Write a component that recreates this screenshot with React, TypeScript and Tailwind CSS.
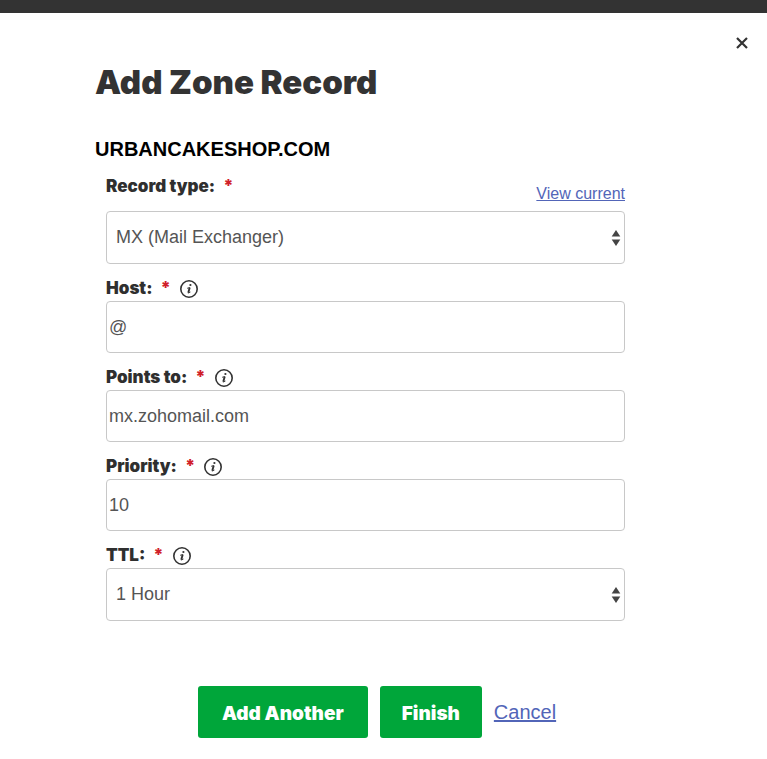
import React from "react";

const InfoIcon = () => (
  <svg viewBox="0 0 20 20" className="h-5 w-5" fill="none" aria-hidden="true">
    <circle cx="10" cy="10" r="8.2" stroke="#333333" strokeWidth="1.6" />
    <circle cx="11.4" cy="6" r="1.1" fill="#333333" />
    <path d="M10.7 8.6L9.3 13.8" stroke="#333333" strokeWidth="1.9" />
    <path
      d="M8.5 9.2l2-.5M9.3 14l1.8-.8"
      stroke="#333333"
      strokeWidth="0.9"
      strokeLinecap="round"
    />
  </svg>
);

const SortArrows = () => (
  <svg
    viewBox="0 0 10 18"
    className="pointer-events-none absolute top-1/2 right-1 h-[18px] w-[10px] -translate-y-1/2"
    fill="#444444"
    aria-hidden="true"
  >
    <path d="M5 1l4.3 6.5H.7z" />
    <path d="M5 17l4.3-6.5H.7z" />
  </svg>
);

type LabelProps = {
  id: string;
  text: string;
  info?: boolean;
};

const FieldLabel: React.FC<LabelProps> = ({ id, text, info }) => (
  <div className="flex h-[37px] items-end pb-0.5">
    <label
      htmlFor={id}
      className="font-[Inter,sans-serif] text-[17px] leading-[22px] font-black text-[#2f2f2f]"
    >
      {text}
      <span className="ml-2 text-[#d0202a]">*</span>
    </label>
    {info && (
      <button type="button" className="ml-2" aria-label={`About ${id}`}>
        <InfoIcon />
      </button>
    )}
  </div>
);

const boxStyle =
  "block w-full rounded-[4px] border border-[#c8c8c8] bg-white text-[18px] text-[#555555]";

const SelectBox = ({ id, options }: { id: string; options: string[] }) => (
  <div className="relative">
    <select id={id} className={`${boxStyle} h-[53px] appearance-none pr-6 pl-[9px]`}>
      {options.map((option) => (
        <option key={option}>{option}</option>
      ))}
    </select>
    <SortArrows />
  </div>
);

const TextBox = ({ id, value }: { id: string; value: string }) => (
  <input
    id={id}
    type="text"
    defaultValue={value}
    className={`${boxStyle} h-[52px] px-0.5`}
  />
);

const greenButton =
  "h-[52px] rounded-[3px] bg-[#00a63a] pt-1 font-[Inter,sans-serif] text-[19px] font-black text-white";

const App: React.FC = () => {
  return (
    <div className="min-h-screen bg-white font-['Liberation_Sans',Arial,sans-serif]">
      <div className="h-[13px] bg-[#333333]" />
      <div className="flex justify-end pt-5 pr-[15px]">
        <button type="button" aria-label="Close" className="p-1">
          <svg viewBox="0 0 12 12" className="h-3 w-3" aria-hidden="true">
            <path
              d="M1 1l10 10M11 1L1 11"
              stroke="#333333"
              strokeWidth="2.2"
            />
          </svg>
        </button>
      </div>
      <main className="px-[95px]">
        <h1 className="mt-2 font-[Inter,sans-serif] text-[33px] leading-[42px] font-black text-[#333333]">
          Add Zone Record
        </h1>
        <h2 className="mt-[34px] text-[20px] leading-6 font-bold text-black">
          URBANCAKESHOP.COM
        </h2>
        <form className="mt-px max-w-[564px]" onSubmit={(e) => e.preventDefault()}>
          <div className="max-w-[530px] pl-[11px]">
            <div className="flex h-[49px] items-start justify-between">
              <FieldLabel id="record-type" text="Record type:" />
              <a
                href="#records"
                className="mt-5 text-[16px] leading-6 text-[#5265b8] underline"
              >
                View current
              </a>
            </div>
            <SelectBox
              id="record-type"
              options={["MX (Mail Exchanger)", "A (Host)", "TXT (Text)"]}
            />
            <FieldLabel id="host" text="Host:" info />
            <TextBox id="host" value="@" />
            <FieldLabel id="points-to" text="Points to:" info />
            <TextBox id="points-to" value="mx.zohomail.com" />
            <FieldLabel id="priority" text="Priority:" info />
            <TextBox id="priority" value="10" />
            <FieldLabel id="ttl" text="TTL:" info />
            <SelectBox id="ttl" options={["1 Hour", "1/2 Hour", "1 Day"]} />
          </div>
          <div className="mt-[65px] flex items-center justify-center gap-3">
            <button type="submit" className={`${greenButton} w-[170px]`}>
              Add Another
            </button>
            <button type="submit" className={`${greenButton} w-[102px]`}>
              Finish
            </button>
            <a href="#cancel" className="text-[20px] text-[#5265b8] underline">
              Cancel
            </a>
          </div>
        </form>
      </main>
    </div>
  );
};

export default App;
